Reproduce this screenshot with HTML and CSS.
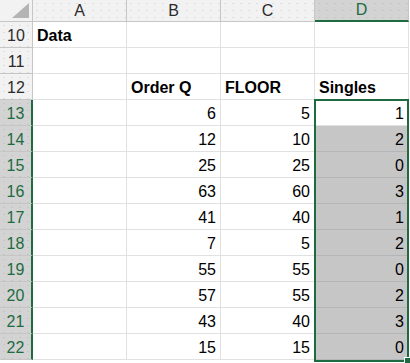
FILE: index.html
```html
<!DOCTYPE html>
<html>
<head>
<meta charset="utf-8">
<link rel="stylesheet" href="styles.css">
</head>
<body>
<div class="sheet">
  <div class="row head">
    <div class="corner"><svg width="32" height="21" viewBox="0 0 32 21"><polygon points="12,18 29,18 29,3" fill="#b4b4b4"/></svg></div>
    <div class="ch">A</div>
    <div class="ch">B</div>
    <div class="ch">C</div>
    <div class="ch on">D</div>
  </div>
  <div class="row"><div class="rh">10</div><div class="c b">Data</div><div class="c"></div><div class="c"></div><div class="c"></div></div>
  <div class="row"><div class="rh">11</div><div class="c"></div><div class="c"></div><div class="c"></div><div class="c"></div></div>
  <div class="row"><div class="rh">12</div><div class="c"></div><div class="c b">Order Q</div><div class="c b">FLOOR</div><div class="c b">Singles</div></div>
  <div class="row"><div class="rh on">13</div><div class="c"></div><div class="c n">6</div><div class="c n">5</div><div class="c n">1</div></div>
  <div class="row"><div class="rh on">14</div><div class="c"></div><div class="c n">12</div><div class="c n">10</div><div class="c n s">2</div></div>
  <div class="row"><div class="rh on">15</div><div class="c"></div><div class="c n">25</div><div class="c n">25</div><div class="c n s">0</div></div>
  <div class="row"><div class="rh on">16</div><div class="c"></div><div class="c n">63</div><div class="c n">60</div><div class="c n s">3</div></div>
  <div class="row"><div class="rh on">17</div><div class="c"></div><div class="c n">41</div><div class="c n">40</div><div class="c n s">1</div></div>
  <div class="row"><div class="rh on">18</div><div class="c"></div><div class="c n">7</div><div class="c n">5</div><div class="c n s">2</div></div>
  <div class="row"><div class="rh on">19</div><div class="c"></div><div class="c n">55</div><div class="c n">55</div><div class="c n s">0</div></div>
  <div class="row"><div class="rh on">20</div><div class="c"></div><div class="c n">57</div><div class="c n">55</div><div class="c n s">2</div></div>
  <div class="row"><div class="rh on">21</div><div class="c"></div><div class="c n">43</div><div class="c n">40</div><div class="c n s">3</div></div>
  <div class="row"><div class="rh on">22</div><div class="c"></div><div class="c n">15</div><div class="c n">15</div><div class="c n s">0</div></div>
  <div class="selection"><div class="handle"></div></div>
</div>
</body>
</html>
```
FILE: styles.css
```css
html, body {
  margin: 0;
  padding: 0;
  background: #ffffff;
}
.sheet {
  position: relative;
  width: 410px;
  height: 363px;
  overflow: hidden;
  font-family: "Liberation Sans", Arial, sans-serif;
  color: #000;
}
.row {
  display: flex;
  height: 26px;
}
.row.head {
  height: 22px;
}
.corner, .ch, .rh, .c {
  box-sizing: border-box;
  flex: none;
}
.corner {
  width: 33px;
  background-color: #f2f2f2;
  border-right: 1px solid #c6c6c6;
  border-bottom: 1px solid #c6c6c6;
}
.corner svg { display: block; }
.ch {
  width: 94px;
  background-color: #f2f2f2;
  background-image: radial-gradient(circle, #dedede 0.6px, transparent 0.8px);
  background-size: 8px 7px;
  border-right: 1px solid #c6c6c6;
  border-bottom: 1px solid #c6c6c6;
  text-align: center;
  font-size: 16px;
  line-height: 21px;
  color: #2b2b2b;
}
.ch.on {
  background-color: #d3d3d3;
  background-image: radial-gradient(circle, #c6c6c6 0.6px, transparent 0.8px);
  color: #1e6b41;
  border-bottom: 2px solid #1e6b41;
  line-height: 20px;
}
.rh {
  width: 33px;
  background-color: #f2f2f2;
  background-image: radial-gradient(circle, #dedede 0.6px, transparent 0.8px);
  background-size: 8px 7px;
  border-right: 1px solid #c6c6c6;
  border-bottom: 1px solid #c6c6c6;
  text-align: center;
  font-size: 16px;
  line-height: 27px;
  color: #2b2b2b;
}
.rh.on {
  background-color: #d3d3d3;
  background-image: radial-gradient(circle, #c6c6c6 0.6px, transparent 0.8px);
  color: #1e6b41;
  border-right: 2px solid #1e6b41;
}
.c {
  width: 94px;
  border-right: 1px solid #e1e1e1;
  border-bottom: 1px solid #e1e1e1;
  font-size: 16px;
  line-height: 27px;
  padding: 0 4px 0 4px;
  white-space: nowrap;
  overflow: hidden;
}
.c.b { font-weight: bold; }
.c.n { text-align: right; }
.c.s {
  background: #c6c6c6;
  border-bottom-color: #b5b5b5;
}
.selection {
  position: absolute;
  left: 314px;
  top: 99px;
  width: 95px;
  height: 263px;
  box-sizing: border-box;
  border: 2px solid #1e6b41;
}
.handle {
  position: absolute;
  right: -5px;
  bottom: -5px;
  width: 6px;
  height: 6px;
  background: #1e6b41;
  border: 1px solid #ffffff;
}
```
